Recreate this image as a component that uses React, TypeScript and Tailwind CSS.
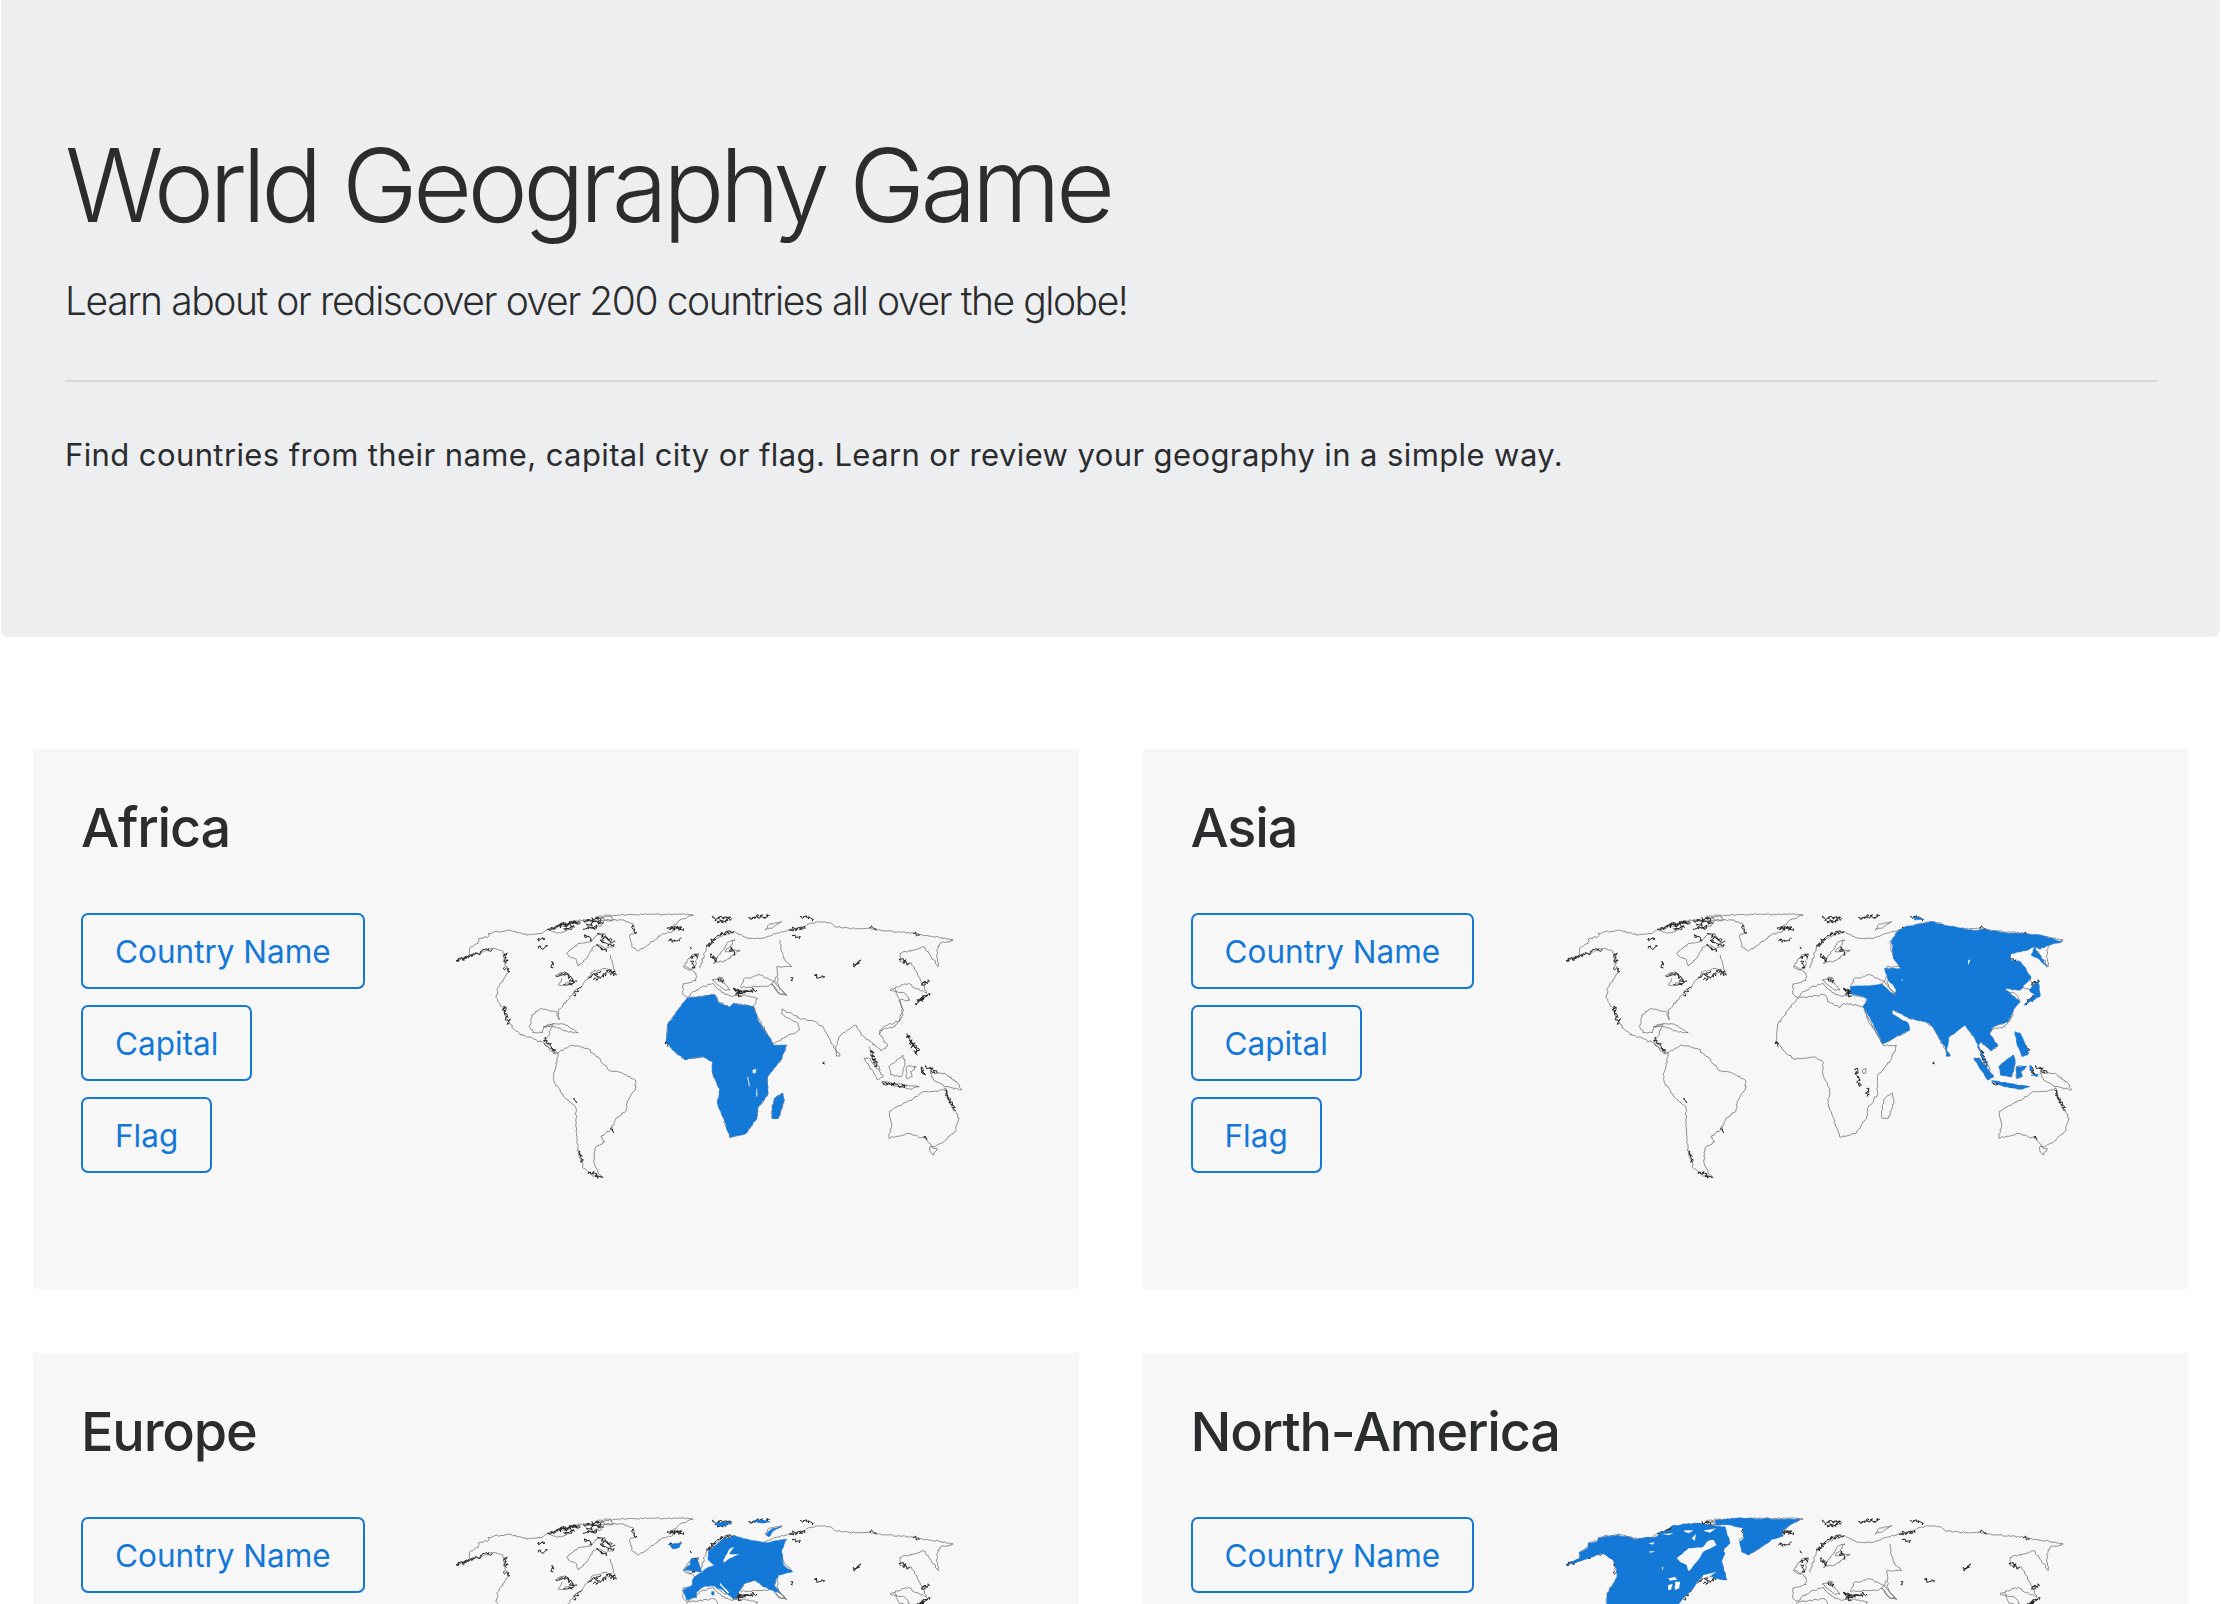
import React from 'react';

const BLUE = '#1478d7';
const CARD_BG = '#f7f7f7';

type P = [number, number];

// coordinates were read off crops of the map, so each group carries its crop's offset
const parse = (s: string, ox = 0, oy = 0, sx = 1): P[] =>
  s.trim().split(/\s+/).map((pair) => {
    const [x, y] = pair.split(',').map(Number);
    return [ox + x * sx, oy + y] as P;
  });

const na = (s: string) => parse(s, 56, 45, 0.933);
const ea = (s: string) => parse(s, 756, 45, 0.933);
const eu = (s: string) => parse(s, 588, 48, 0.933);
const nf = (s: string) => parse(s, 56, 48, 0.933);
const g = (s: string) => parse(s);

// small repeatable noise so that coasts are not straight segments
function rough(points: P[], amount: number, closed: boolean, seed = 1, step = 6) {
  let n = seed * 9301 + 49297;
  const rnd = () => {
    n = (n * 9301 + 49297) % 233280;
    return n / 233280 - 0.5;
  };
  const list = closed ? [...points, points[0]] : points;
  let d = `M${list[0][0].toFixed(1)} ${list[0][1].toFixed(1)}`;
  for (let i = 1; i < list.length; i++) {
    const [ax, ay] = list[i - 1];
    const [bx, by] = list[i];
    const steps = Math.max(1, Math.round(Math.hypot(bx - ax, by - ay) / step));
    for (let k = 1; k <= steps; k++) {
      const t = k / steps;
      const j = k === steps ? 0 : amount;
      d += `L${(ax + (bx - ax) * t + rnd() * j).toFixed(1)} ${(ay + (by - ay) * t + rnd() * j).toFixed(1)}`;
    }
  }
  return closed ? d + 'Z' : d;
}

const coastLines: P[][] = [
  // alaska, canada north coast
  na('18,168 60,150 58,130 85,115 85,102 115,95 115,85 175,75 235,90 280,82 300,72 330,62 390,45 440,45 465,35'),
  // pacific side down to panama
  [...na('18,168 100,140 130,130 160,140 165,180 178,200 165,215 142,250 140,280 155,305 170,340 190,370 215,390'), ...g('255,432 290,447 320,460 345,490 358,492')],
  // greenland
  na('465,35 540,28 680,28 730,30 690,45 665,68 670,78 635,88 600,115 565,138 545,125 540,90 553,85 550,58 515,45 470,45 445,38'),
  // hudson bay
  na('350,145 385,115 425,110 440,90 465,85 480,110 490,125 470,130 445,120 430,125 415,150 395,175 385,183 380,165 360,155 350,145'),
  // labrador to the gulf
  [...na('480,150 490,185 500,208 470,190 430,200 400,235 370,265 340,300 325,320 328,345 322,322 270,312 245,330 238,365 250,380'), ...g('288,428 315,428 320,410 345,404 330,440 322,465 358,488')],
  // arctic islands and lakes
  na('295,72 345,62 355,75 320,85 295,72'),
  na('400,45 445,48 455,62 420,70 400,45'),
  na('440,35 480,30 490,45 450,48 440,35'),
  na('320,210 345,200 370,225 340,240 325,240 335,220'),
  na('700,185 725,150 745,145 735,185 715,195 700,185'),
  // caribbean
  g('318,410 345,400 380,405 415,428 385,425 350,410 318,410'),
  // south america
  g('358,488 395,465 440,475 470,500 500,540 540,550 575,570 575,600 555,630 548,665 520,685 505,720 478,740 490,755 462,775 458,815 470,845 485,862 455,858 430,835 415,790 410,720 408,650 380,625 350,580 345,565 352,530 358,488'),
  // africa
  g('720,325 798,315 805,335 840,352 850,340 905,350 920,395 945,435 960,465 998,466 985,505 945,560 945,615 917,655 915,685 885,730 840,742 820,680 805,640 812,600 790,545 792,515 765,500 712,508 680,480 662,455 665,405 685,375 720,325'),
  g('988,610 992,630 975,685 958,685 958,650 965,625 988,610'),
  g('903,540 914,536 912,550 904,550 903,540'),
  // western europe and mediterranean
  g('720,322 708,312 708,282 745,272 745,250 725,235 712,228'),
  g('720,322 745,300 790,280 815,305 845,320 870,315 918,325 905,350'),
  g('790,270 815,262 840,300 825,300 790,270'),
  g('870,292 880,265 925,255 965,275 985,300 998,316 975,310 960,285 920,290 870,292'),
  // scandinavia and arctic russia
  ea('0,190 20,125 50,100 100,80 150,100 190,100 230,85 265,75 310,65 350,50 395,55 405,65 450,70 500,70 560,78 640,85 760,105 720,115 710,135 715,185 690,150 670,125 640,135 600,145 600,170 635,175 665,230 680,265 645,250 625,235 570,255 615,265 630,285 600,285 610,330 585,365 540,375 540,390'),
  ea('40,175 85,110 105,105 75,140 120,135 80,165 40,175'),
  ea('195,75 205,60 245,50 215,70 195,75'),
  // urals and caspian
  ea('240,105 250,160 275,185 230,185 235,210 215,235 240,265 260,270 235,245 232,215'),
  // arabia, india, south east asia
  g('905,350 945,435 960,462 1035,420 1030,400 1005,385 985,372 985,357 1035,385 1080,395 1100,410 1135,480 1145,440 1190,405 1215,440 1235,455 1262,482 1282,468 1258,430 1270,410 1310,395 1325,360 1300,295'),
  g('1230,470 1240,510 1262,540'),
  g('1138,480 1148,498 1138,498 1138,480'),
  g('1215,505 1230,505 1270,560 1255,570 1215,505'),
  g('1265,575 1370,590 1345,597 1265,575'),
  g('1285,530 1325,495 1330,520 1320,560 1290,555 1285,530'),
  g('1335,530 1362,530 1345,545 1350,560 1335,565 1335,530'),
  g('1400,548 1440,550 1475,575 1488,600 1445,590 1410,570 1400,548'),
  // australia
  g('1285,665 1355,625 1380,605 1420,605 1445,595 1460,650 1482,685 1470,725 1430,760 1410,770 1385,745 1340,730 1285,745 1292,700 1285,665'),
  g('1400,770 1420,775 1410,795 1400,785 1400,770'),
];

// the denser, darker stretches of coast
const darkBits: P[][] = [
  na('295,75 345,62 385,48'), na('325,60 390,50'), na('340,70 375,65'), na('400,48 450,42'), na('410,60 460,50'), na('400,75 440,65'), na('445,88 495,110'), na('450,105 490,125'),
  na('405,90 425,105'), na('440,120 470,135'), na('262,105 285,100'), na('265,130 290,125'), na('165,145 170,175'), na('165,185 180,200'), na('60,150 125,132'), na('18,168 60,152'),
  na('305,172 310,188'), na('318,210 345,205'), na('345,205 370,230'), na('345,240 380,230'), na('415,220 450,200'), na('430,225 470,205'), na('470,195 500,210'), na('395,245 370,270'),
  na('550,60 555,85'), na('655,72 690,68'), na('655,108 695,100'), na('720,125 723,130'), na('660,68 700,70'), na('720,160 745,150'), na('725,170 735,190'),
  ea('40,40 95,40'), ea('50,48 85,46'), ea('145,37 210,32'), ea('300,35 340,42'), ea('20,125 50,95'), ea('35,150 50,170'), ea('55,90 100,80'), ea('90,125 100,150'),
  ea('100,250 125,275'), ea('110,255 130,265'), ea('55,220 70,235'), ea('270,75 315,65'), ea('280,90 300,100'), ea('272,218 278,228'), ea('345,212 370,220'), ea('460,182 482,165'),
  ea('510,66 525,70'), ea('640,85 655,90'), ea('600,165 630,175'), ea('665,235 690,230'), ea('645,295 680,275'), ea('655,285 690,265'),
  g('1335,430 1365,495'), g('1345,455 1368,480'), g('1390,530 1420,550'), g('1235,480 1250,530'), g('1265,578 1335,590'), g('1375,530 1385,555'), g('1104,515 1106,522'),
  g('420,785 428,815'), g('445,845 480,862'), g('505,715 512,725'), g('1440,600 1470,660'), g('1385,740 1392,750'), g('402,628 410,635'), g('660,455 668,470'), g('885,535 895,590'), g('914,595 916,620'),
  g('205,350 222,400'), g('320,445 350,490'), g('915,300 860,305'),
];

// holes drawn over the fill in the card colour
const regions: Record<string, { fills: P[][]; holes?: P[][] }> = {
  Africa: {
    fills: [
      g('720,325 798,315 805,335 840,352 850,340 905,350 920,395 945,435 960,465 998,466 985,505 945,560 945,615 917,655 915,685 885,730 840,742 820,680 805,640 812,600 790,545 792,515 765,500 712,508 680,480 662,455 665,405 685,375 720,325'),
      g('988,610 992,630 975,685 958,685 958,650 965,625 988,610'),
    ],
    holes: [g('903,540 914,536 912,550 904,550'), g('888,560 891,562 896,590 893,588'), g('914,595 916,596 916,620 914,620')],
  },
  Asia: {
    fills: [
      g('985,150 1000,125 1020,112 1095,95 1165,112 1215,122 1240,118 1300,128 1400,135 1462,155 1425,165 1400,178 1385,170 1360,182 1320,190 1315,210 1345,215 1375,262 1345,300 1300,295 1345,335 1325,360 1310,395 1270,410 1258,430 1282,468 1262,482 1235,455 1225,470 1255,530 1215,440 1190,405 1145,440 1138,480 1100,410 1080,395 1035,385 985,357 985,372 1005,385 1030,400 1035,420 960,460 945,425 905,350 918,325 870,310 870,290 920,288 955,282 995,318 998,300 975,270 965,235 1010,235 990,205 985,150'),
      g('1385,172 1420,232 1395,205 1375,195'),
      g('1355,345 1385,315 1370,300 1395,272 1400,320 1370,335'),
      g('1215,505 1230,505 1270,560 1255,570'),
      g('1265,572 1300,578 1370,590 1345,597 1300,590'),
      g('1285,530 1325,495 1330,520 1320,560 1290,555'),
      g('1335,530 1362,530 1345,545 1350,560 1335,565'),
      g('1330,425 1345,430 1368,490 1350,500 1335,460'),
      g('1138,480 1148,498 1138,498'),
      g('1045,80 1070,88 1050,90'),
      g('1372,525 1380,540 1372,542'),
      g('1375,555 1395,552 1392,560'),
    ],
    holes: [g('1198,212 1205,208 1200,226'), g('1013,266 1017,270 1013,273')],
  },
  Europe: {
    fills: [
      eu('130,240 155,228 160,205 205,172 225,165 205,150 205,125 245,90 285,78 335,92 375,98 440,88 425,120 430,165 458,185 415,195 402,225 420,250 395,240 370,230 345,210 310,222 295,250 280,268 250,240 225,228 195,228 170,245 170,262 140,270'),
      eu('130,180 150,165 155,145 172,150 185,185 160,182'),
      eu('88,102 125,100 118,112 98,116'),
      eu('225,40 275,35 255,48 238,50'),
      eu('340,33 365,30 390,36 360,38'),
      eu('378,75 395,58 425,50 398,62 388,80'),
      eu('215,245 222,245 222,255 216,255'),
    ],
    holes: [eu('250,150 268,118 282,110 268,133 298,133 270,145 252,158'), eu('240,218 268,248 263,250 240,224')],
  },
  'North-America': {
    fills: [
      nf('465,32 520,25 720,28 690,45 665,65 670,78 635,88 600,115 565,135 545,125 540,95 553,85 550,55 512,45 470,45'),
      nf('20,165 60,145 58,128 85,115 85,100 112,95 115,85 175,75 230,88 290,80 300,68 330,62 335,48 380,42 410,40 445,45 495,50 510,100 488,120 495,130 485,155 500,210 470,205 445,195 420,205 395,240 365,270 340,300 325,320 328,345 322,322 270,312 245,330 238,365 250,380 215,390 190,370 170,340 155,305 140,280 142,250 165,215 172,195 162,150 125,130 100,140'),
      g('255,432 290,447 320,460 345,490 358,492 322,465 330,440 345,404 320,410 315,428 288,428 270,400 225,395 240,410'),
      g('318,410 345,400 380,405 415,428 385,425 350,410'),
    ],
    holes: [
      nf('350,145 385,115 428,112 445,92 462,90 470,105 445,118 430,125 415,150 395,175 385,183 380,165 360,155'),
      nf('325,205 345,200 352,210 330,212'), nf('345,215 360,215 358,235 345,240'), nf('325,225 338,222 332,240 325,240'),
      nf('265,100 285,97 278,104'), nf('265,126 288,122 275,128'), nf('305,170 310,172 308,184'),
      nf('430,195 470,185 450,200 425,205'), nf('305,72 340,70 325,76'), nf('370,62 400,60 385,70'), nf('430,62 470,55 450,68'), nf('395,85 408,72 404,92'),
    ],
  },
};

function WorldMap({ region }: { region: string }) {
  const r = regions[region];
  return (
    <svg viewBox="0 0 1568 900" preserveAspectRatio="none" className="w-[560px] h-[300px] shrink-0">
      {coastLines.map((line, i) => (
        <path key={i} d={rough(line, 5, false, i + 3, 5)} fill="none" stroke="#5f5f5f" strokeWidth="2" />
      ))}
      {darkBits.map((line, i) => (
        <path key={i} d={rough(line, 13, false, i + 40, 2.5)} fill="none" stroke="#262626" strokeWidth="2.8" />
      ))}
      {r.fills.map((f, i) => (
        <path key={i} d={rough(f, 3.5, true, i + 80, 8)} fill={BLUE} stroke={BLUE} strokeWidth="2" />
      ))}
      {r.holes?.map((f, i) => (
        <path key={i} d={rough(f, 2, true, i + 90, 8)} fill={CARD_BG} />
      ))}
    </svg>
  );
}

function GameButton({ children }: { children: React.ReactNode }) {
  return (
    <a className="inline-block self-start h-[76px] leading-[73px] px-[32px] border-2 border-[#1478d7] rounded-[7px] text-[#1478d7] text-[31.5px]">
      {children}
    </a>
  );
}

function ContinentCard({ name }: { name: string }) {
  return (
    <section className="bg-[#f7f7f7] h-[540px] px-[48px] pt-[47px]">
      <h2 className="h-[94px] text-[54px] leading-[64px] font-medium text-[#2b2c2e] tracking-[-1.2px]">{name}</h2>
      <div className="flex items-start">
        <div className="w-[349px] shrink-0 pt-[23px] flex flex-col gap-[16px]">
          <GameButton>Country Name</GameButton>
          <GameButton>Capital</GameButton>
          <GameButton>Flag</GameButton>
        </div>
        <WorldMap region={name} />
      </div>
    </section>
  );
}

export default function App() {
  return (
    <div className="h-screen overflow-hidden bg-white font-['Inter',sans-serif]">
      <header className="mx-px h-[637px] pl-[64px] pr-[63px] pt-[124px] bg-[#edeef0] rounded-b-[8px] text-[#2b2c2e]">
        <h1 className="text-[102px] leading-[122px] font-light tracking-[-4.75px]">World Geography Game</h1>
        <p className="mt-[28px] text-[39px] leading-[54px] font-light tracking-[-1.43px]">
          Learn about or rediscover over 200 countries all over the globe!
        </p>
        <hr className="mt-[52px] border-0 h-[2px] bg-[#d5d7d9]" />
        <p className="mt-[50px] text-[31px] leading-[46px] tracking-[0.4px]">
          Find countries from their name, capital city or flag. Learn or review your geography in a simple way.
        </p>
      </header>
      <main className="mt-[112px] px-[33px] grid grid-cols-2 gap-[64px]">
        <ContinentCard name="Africa" />
        <ContinentCard name="Asia" />
        <ContinentCard name="Europe" />
        <ContinentCard name="North-America" />
      </main>
    </div>
  );
}
